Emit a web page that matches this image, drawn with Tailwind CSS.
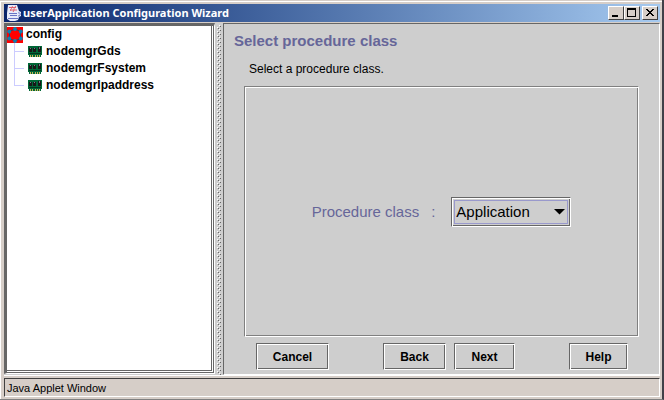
<!DOCTYPE html>
<html lang="en">
<head>
    <meta charset="UTF-8">
    <meta name="viewport" content="width=device-width, initial-scale=1.0">
    <title>userApplication Configuration Wizard</title>
    <script src="https://cdn.jsdelivr.net/npm/@tailwindcss/browser@4"></script>
</head>
<body class="font-['Liberation_Sans',sans-serif] text-black">
    <!-- Shared icons -->
    <svg class="hidden">
        <symbol id="card" viewBox="0 0 14 12">
            <g shape-rendering="crispEdges">
                <path d="M0 0h14v9H13v2H1V9H0z" fill="#006637"/>
                <path d="M1 2h3v4H1zM5 2h3v4H5zM10 1h3v5h-3z" fill="#181818"/>
                <path d="M2 2h1v1H2zM6 2h1v1H6zM11 1h1v2h-1z" fill="#778"/>
                <path d="M1 7h12v1H1z" fill="#00351c"/>
                <path d="M2 9h1v2H2zM4 9h1v2H4zM7 9h1v2H7zM9 9h1v2H9zM11 9h1v2h-1z" fill="#c8b458"/>
            </g>
        </symbol>
    </svg>

    <div class="h-screen flex flex-col bg-[#d6cec8] border-r-2 border-b border-r-[#404048] border-b-[#808080] pt-px">
        <div class="flex-1 min-h-0 flex flex-col border-t border-l border-white pt-0.5 pl-[3px] pr-0.5">
            <!-- Title bar -->
            <header class="h-[18px] shrink-0 flex items-center px-0.5 bg-linear-to-r from-[#0a246a] to-[#a6caf0]">
                <svg class="size-4 shrink-0" viewBox="0 0 16 16" fill="none">
                    <path d="M2 0h9l2 6 2 1v4l-2 1-1 3-3 1H4l-3-2V8z" fill="#e8ebfa"/>
                    <path d="M6 1c2 2-3 3-1 5M10 1C7 3 9 4 7 7M3 2.5h7M4 5h7" stroke="#e0606c"/>
                    <path d="M3 8.5h8M4 10.5h7M2 13.5h10M12 8c3-1 3 3 0 3" stroke="#6a74c4"/>
                </svg>
                <h1 class="flex-1 pl-px whitespace-nowrap font-['Noto_Sans',sans-serif] text-[11px] leading-4 font-bold text-white">userApplication Configuration Wizard</h1>
                <div class="flex">
                    <button aria-label="Minimize" class="w-4 h-3.5 bg-[#d6cec8] border border-t-white border-l-white border-r-[#404040] border-b-[#404040]">
                        <svg class="w-3.5 h-3" viewBox="0 0 14 12"><path d="M3 8h6v2H3z"/></svg>
                    </button>
                    <button aria-label="Maximize" class="w-4 h-3.5 bg-[#d6cec8] border border-t-white border-l-white border-r-[#404040] border-b-[#404040]">
                        <svg class="w-3.5 h-3" viewBox="0 0 14 12"><path fill-rule="evenodd" d="M2 1h9v9H2zM3 3v6h7V3z"/></svg>
                    </button>
                    <button aria-label="Close" class="ml-0.5 w-4 h-3.5 bg-[#d6cec8] border border-t-white border-l-white border-r-[#404040] border-b-[#404040]">
                        <svg class="w-3.5 h-3" viewBox="0 0 14 12" shape-rendering="crispEdges"><path d="M3 2h2v1h1v1h2V3h1V2h2v1h-1v1H9v1H8v1h1v1h1v1h1v1H9V8H8V7H6v1H5v1H3V8h1V7h1V6h1V5H5V4H4V3H3z"/></svg>
                    </button>
                </div>
            </header>

            <main class="flex-1 min-h-0 flex mt-px bg-[#cecece] border-b border-white">
                <!-- Tree -->
                <nav class="w-[211px] mb-px shrink-0 border-t-3 border-l-3 border-[#666] border-r border-r-white border-b border-b-white">
                    <div class="h-full bg-white border-r-3 border-b-3 border-double border-[#666] text-[12px] leading-[17px] font-bold">
                        <div class="flex items-center gap-[3px] h-[17px]">
                            <svg class="size-4" viewBox="0 0 16 16">
                                <path d="M0 0h16v16H0z" fill="#f00"/>
                                <path d="M8 2l5.5 2.5v7L8 14l-5.5-2.5v-7z" fill="none" stroke="#284868"/>
                                <g fill="#1080b0">
                                    <circle cx="8" cy="2" r="1.9"/><circle cx="13.8" cy="4.5" r="1.9"/>
                                    <circle cx="13.8" cy="11.5" r="1.9"/><circle cx="8" cy="14" r="1.9"/>
                                    <circle cx="2.2" cy="11.5" r="1.9"/><circle cx="2.2" cy="4.5" r="1.9"/>
                                </g>
                            </svg>
                            <span>config</span>
                        </div>
                        <ul class="pl-[7px]">
                            <li class="flex items-center h-[17px]">
                                <svg class="w-3.5 h-[17px]" viewBox="0 0 14 17"><path d="M.5 0v17M0 8.5h10" stroke="#ccf"/></svg>
                                <svg class="w-3.5 h-3 mr-1"><use href="#card"/></svg>
                                <span>nodemgrGds</span>
                            </li>
                            <li class="flex items-center h-[17px]">
                                <svg class="w-3.5 h-[17px]" viewBox="0 0 14 17"><path d="M.5 0v17M0 8.5h10" stroke="#ccf"/></svg>
                                <svg class="w-3.5 h-3 mr-1"><use href="#card"/></svg>
                                <span>nodemgrFsystem</span>
                            </li>
                            <li class="flex items-center h-[17px]">
                                <svg class="w-3.5 h-[17px]" viewBox="0 0 14 17"><path d="M.5 0v9M0 8.5h10" stroke="#ccf"/></svg>
                                <svg class="w-3.5 h-3 mr-1"><use href="#card"/></svg>
                                <span>nodemgrIpaddress</span>
                            </li>
                        </ul>
                    </div>
                </nav>

                <!-- Splitter grip -->
                <svg class="w-2 h-full shrink-0" shape-rendering="crispEdges">
                    <defs>
                        <pattern id="grip" width="4" height="4" patternUnits="userSpaceOnUse">
                            <path d="M2 0h1v1H2zM0 2h1v1H0z" fill="#fff"/>
                            <path d="M3 1h1v1H3zM1 3h1v1H1z" fill="#666"/>
                        </pattern>
                    </defs>
                    <rect x="2" y="2" width="4" height="100%" fill="url(#grip)"/>
                </svg>

                <!-- Wizard page -->
                <form class="flex-1 min-w-0 flex flex-col border-t border-l border-[#666] border-r border-r-white border-b border-b-white px-5 pb-1">
                    <h2 class="-ml-2.5 mt-[9px] text-[15px] leading-4 font-bold text-[#669]">Select procedure class</h2>
                    <p class="mt-3 ml-[5px] text-[12px] leading-4">Select a procedure class.</p>
                    <div class="flex-1 mt-[9px] flex items-center justify-center gap-4 border border-[#808080] border-r-white border-b-white shadow-[inset_1px_1px_0_white,inset_-1px_-1px_0_#808080]">
                        <label for="procedure" class="flex gap-3 text-[15px] leading-5 text-[#669]"><span>Procedure class</span><span>:</span></label>
                        <div class="relative p-0.5 border border-[#666] border-r-white border-b-white shadow-[inset_1px_1px_0_white,inset_-1px_-1px_0_#666]">
                            <select id="procedure" class="block appearance-none w-[114px] h-6 pl-px border border-[#99c] text-[15px]">
                                <option>Application</option>
                            </select>
                            <svg class="absolute right-1 top-[11px] w-3 h-1.5 pointer-events-none" viewBox="0 0 12 6"><path d="M0 0h11L5.5 5.5z"/></svg>
                        </div>
                    </div>
                    <div class="mt-1.5 ml-3 mr-[11px] flex justify-between text-[12px] font-bold">
                        <button type="button" class="w-[73px] h-[27px] border border-[#666] border-r-white border-b-white shadow-[inset_1px_1px_0_white,inset_-1px_-1px_0_#666]">Cancel</button>
                        <div class="flex gap-2">
                            <button type="button" class="w-[63px] h-[27px] border border-[#666] border-r-white border-b-white shadow-[inset_1px_1px_0_white,inset_-1px_-1px_0_#666]">Back</button>
                            <button type="button" class="w-[61px] h-[27px] border border-[#666] border-r-white border-b-white shadow-[inset_1px_1px_0_white,inset_-1px_-1px_0_#666]">Next</button>
                        </div>
                        <button type="button" class="w-[59px] h-[27px] border border-[#666] border-r-white border-b-white shadow-[inset_1px_1px_0_white,inset_-1px_-1px_0_#666]">Help</button>
                    </div>
                </form>
            </main>

            <!-- Status bar -->
            <footer class="h-[19px] shrink-0 my-0.5 pl-0.5 border border-t-[#404040] border-l-[#404040] border-r-white border-b-white text-[11px] leading-[18px]">Java Applet Window</footer>
        </div>
    </div>
</body>
</html>
